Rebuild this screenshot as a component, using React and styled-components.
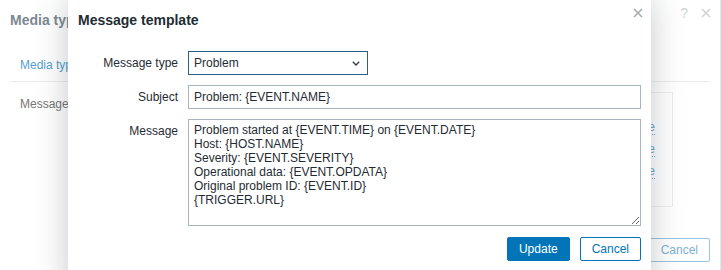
import { styled, createGlobalStyle } from 'styled-components';

const GlobalStyle = createGlobalStyle`
  html, body {
    margin: 0;
    padding: 0;
    background: #fff;
  }
  body {
    font-family: 'Liberation Sans', Arial, sans-serif;
    font-size: 12px;
    color: #1f2c33;
  }
`;

const Screen = styled.div`
  position: relative;
  width: 721px;
  height: 270px;
  overflow: hidden;
  background: #fff;
`;

// dialog that sits behind, faded
const BackDialog = styled.section`
  box-sizing: border-box;
  width: 721px;
  height: 270px;
  border-right: 1px solid #e4e8ea;
  display: flex;
  flex-direction: column;
`;

const Header = styled.header`
  position: relative;
  box-sizing: border-box;
  height: 40px;
  padding: 12px 10px 0 10px;
`;

const Title = styled.h4`
  margin: 0;
  font-size: 14px;
  line-height: 17px;
  font-weight: bold;
  color: ${(p) => (p.$faded ? '#7c8990' : '#1f2c33')};
`;

const HeaderIcons = styled.div`
  position: absolute;
  top: 6px;
  right: 8px;
  display: flex;
  align-items: center;
  gap: 12px;
  color: #cfd4d7;
`;

const Help = styled.span`
  font-size: 14px;
  line-height: 14px;
`;

const CloseBtn = styled.button`
  width: 12px;
  height: 12px;
  padding: 0;
  border: 0;
  background: none;
  display: flex;
  align-items: center;
  justify-content: center;
  color: inherit;
`;

const ModalClose = styled(CloseBtn)`
  position: absolute;
  top: 7px;
  right: 7px;
  color: #a3acb1;
`;

const Tabs = styled.nav`
  margin: 0 10px;
  padding: 17px 10px 8px;
  border-bottom: 1px solid #ececec;
  display: flex;
`;

const Tab = styled.span`
  line-height: 16px;
  font-size: 12px;
  color: #55a0d0;
`;

const BackContent = styled.div`
  display: flex;
  padding: 10px 47px 0 20px;
`;

const BackLabel = styled.span`
  width: 130px;
  line-height: 24px;
  color: #767676;
`;

const OpsBox = styled.div`
  flex: 1;
  box-sizing: border-box;
  height: 115px;
  border: 1px solid #eceeef;
  padding-top: 24px;
`;

const OpsRow = styled.div`
  height: 22px;
  display: flex;
  align-items: center;
  justify-content: flex-end;
  padding-right: 17px;
`;

const OpsLink = styled.span`
  color: #6aa9d4;
  border-bottom: 1px dotted #6aa9d4;
  line-height: 13px;
`;

const BackFooter = styled.footer`
  display: flex;
  justify-content: flex-end;
  padding: 31px 10px 0;
`;

const Button = styled.button`
  box-sizing: border-box;
  height: 24px;
  padding: 0 11px;
  border-radius: 2px;
  font-family: 'Liberation Sans', Arial, sans-serif;
  font-size: 12px;
  line-height: 22px;
  border: 1px solid ${(p) => p.$border || '#0275b8'};
  background: ${(p) => (p.$primary ? '#0275b8' : '#fff')};
  color: ${(p) => (p.$primary ? '#fff' : p.$text || '#0275b8')};
`;

// front modal
const Modal = styled.section`
  position: absolute;
  left: 68px;
  top: 0;
  width: 583px;
  height: 290px;
  background: #fff;
  box-shadow: 0 0 30px rgba(40, 55, 65, 0.28);
`;

const Form = styled.div`
  display: grid;
  grid-template-columns: 100px 453px;
  column-gap: 10px;
  row-gap: 10px;
  padding: 11px 10px 0;
`;

const Label = styled.label`
  text-align: right;
  line-height: 24px;
  color: #1f2c33;
`;

const SelectBox = styled.div`
  box-sizing: border-box;
  width: 180px;
  height: 24px;
  border: 1px solid #2b5f8e;
  padding: 0 7px 0 5px;
  display: flex;
  align-items: center;
  justify-content: space-between;
  color: #1f2c33;
`;

const Input = styled.input`
  box-sizing: border-box;
  width: 453px;
  height: 24px;
  margin: 0;
  border: 1px solid #a6b4bb;
  padding: 0 5px;
  font-family: 'Liberation Sans', Arial, sans-serif;
  font-size: 12px;
  color: #1f2c33;
  outline: none;
`;

const TextArea = styled.textarea`
  box-sizing: border-box;
  width: 453px;
  height: 107px;
  margin: 0;
  border: 1px solid #a6b4bb;
  padding: 3px 5px;
  font-family: 'Liberation Sans', Arial, sans-serif;
  font-size: 12px;
  line-height: 14px;
  color: #1f2c33;
  outline: none;
  resize: both;
  display: block;
`;

const Footer = styled.footer`
  display: flex;
  justify-content: flex-end;
  gap: 10px;
  padding: 11px 10px 0;
`;

const Cross = ({ size = 10 }) => (
  <svg width={size} height={size} viewBox="0 0 10 10" fill="none" stroke="currentColor" strokeWidth="1.6">
    <path d="M1 1 L9 9 M9 1 L1 9" />
  </svg>
);

const Chevron = () => (
  <svg width="8" height="5" viewBox="0 0 8 5" fill="none" stroke="#2c3a42" strokeWidth="1.3">
    <path d="M0.8 0.8 L4 4 L7.2 0.8" />
  </svg>
);

const message = `Problem started at {EVENT.TIME} on {EVENT.DATE}
Host: {HOST.NAME}
Severity: {EVENT.SEVERITY}
Operational data: {EVENT.OPDATA}
Original problem ID: {EVENT.ID}
{TRIGGER.URL}`;

export default function App() {
  return (
    <>
      <GlobalStyle />
      <Screen>
        <BackDialog>
          <Header>
            <Title $faded>Media type</Title>
            <HeaderIcons>
              <Help>?</Help>
              <CloseBtn>
                <Cross />
              </CloseBtn>
            </HeaderIcons>
          </Header>
          <Tabs>
            <Tab>Media type</Tab>
          </Tabs>
          <BackContent>
            <BackLabel>Message templates</BackLabel>
            <OpsBox>
              <OpsRow>
                <OpsLink>Remove</OpsLink>
              </OpsRow>
              <OpsRow>
                <OpsLink>Remove</OpsLink>
              </OpsRow>
              <OpsRow>
                <OpsLink>Remove</OpsLink>
              </OpsRow>
            </OpsBox>
          </BackContent>
          <BackFooter>
            <Button $border="#9cc3df" $text="#7fb2d6">Cancel</Button>
          </BackFooter>
        </BackDialog>

        <Modal>
          <Header>
            <Title>Message template</Title>
            <ModalClose>
              <Cross />
            </ModalClose>
          </Header>
          <Form>
            <Label>Message type</Label>
            <SelectBox>
              <span>Problem</span>
              <Chevron />
            </SelectBox>
            <Label>Subject</Label>
            <Input defaultValue="Problem: {EVENT.NAME}" />
            <Label>Message</Label>
            <TextArea defaultValue={message} />
          </Form>
          <Footer>
            <Button $primary>Update</Button>
            <Button>Cancel</Button>
          </Footer>
        </Modal>
      </Screen>
    </>
  );
}
